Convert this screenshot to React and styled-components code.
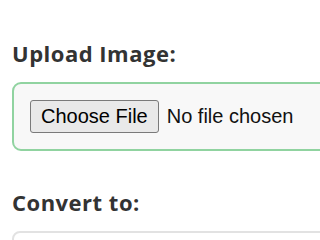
import React from 'react'
import styled, { createGlobalStyle } from 'styled-components'

const GlobalStyle = createGlobalStyle`
  html, body {
    margin: 0;
    padding: 0;
    background: #fff;
    overflow: hidden;
  }
`

function App() {
  return (
    <>
      <GlobalStyle />
      <Page>
        <Section>
          <Heading>Upload Image:</Heading>
          <UploadBox>
            <FileButton type="button">Choose File</FileButton>
            <FileStatus>No file chosen</FileStatus>
          </UploadBox>
        </Section>

        <Section>
          <Heading>Convert to:</Heading>
          <Select />
        </Section>
      </Page>
    </>
  )
}

export default App

const Page = styled.div`
  width: 100vw;
  height: 100vh;
  overflow: hidden;
  box-sizing: border-box;
  padding: 39px 0 0 12px;
  display: flex;
  flex-direction: column;
  gap: 37px;
`

const Section = styled.div`
  display: flex;
  flex-direction: column;
  gap: 15px;
  width: 600px;
  flex-shrink: 0;
`

const Heading = styled.h3`
  margin: 0;
  font-family: "Open Sans", sans-serif;
  font-size: 22px;
  line-height: 28px;
  letter-spacing: 0.5px;
  font-weight: 700;
  color: #333;
`

const UploadBox = styled.div`
  display: flex;
  align-items: center;
  gap: 8px;
  padding: 16px 16px;
  background: #f8f8f8;
  border: 2px solid #90d3a0;
  border-radius: 9px;
`

const FileButton = styled.button`
  font-family: "Liberation Sans", Arial, sans-serif;
  font-size: 20px;
  line-height: 23px;
  padding: 4px 10px;
  color: #000;
  background: #e9e9e9;
  border: 1px solid #7a7a7a;
  border-radius: 3px;
`

const FileStatus = styled.span`
  font-family: "Liberation Sans", Arial, sans-serif;
  font-size: 20px;
  color: #111;
  white-space: nowrap;
`

const Select = styled.div`
  height: 40px;
  flex-shrink: 0;
  background: #fff;
  border: 2px solid #e2e2e2;
  border-radius: 8px;
`
